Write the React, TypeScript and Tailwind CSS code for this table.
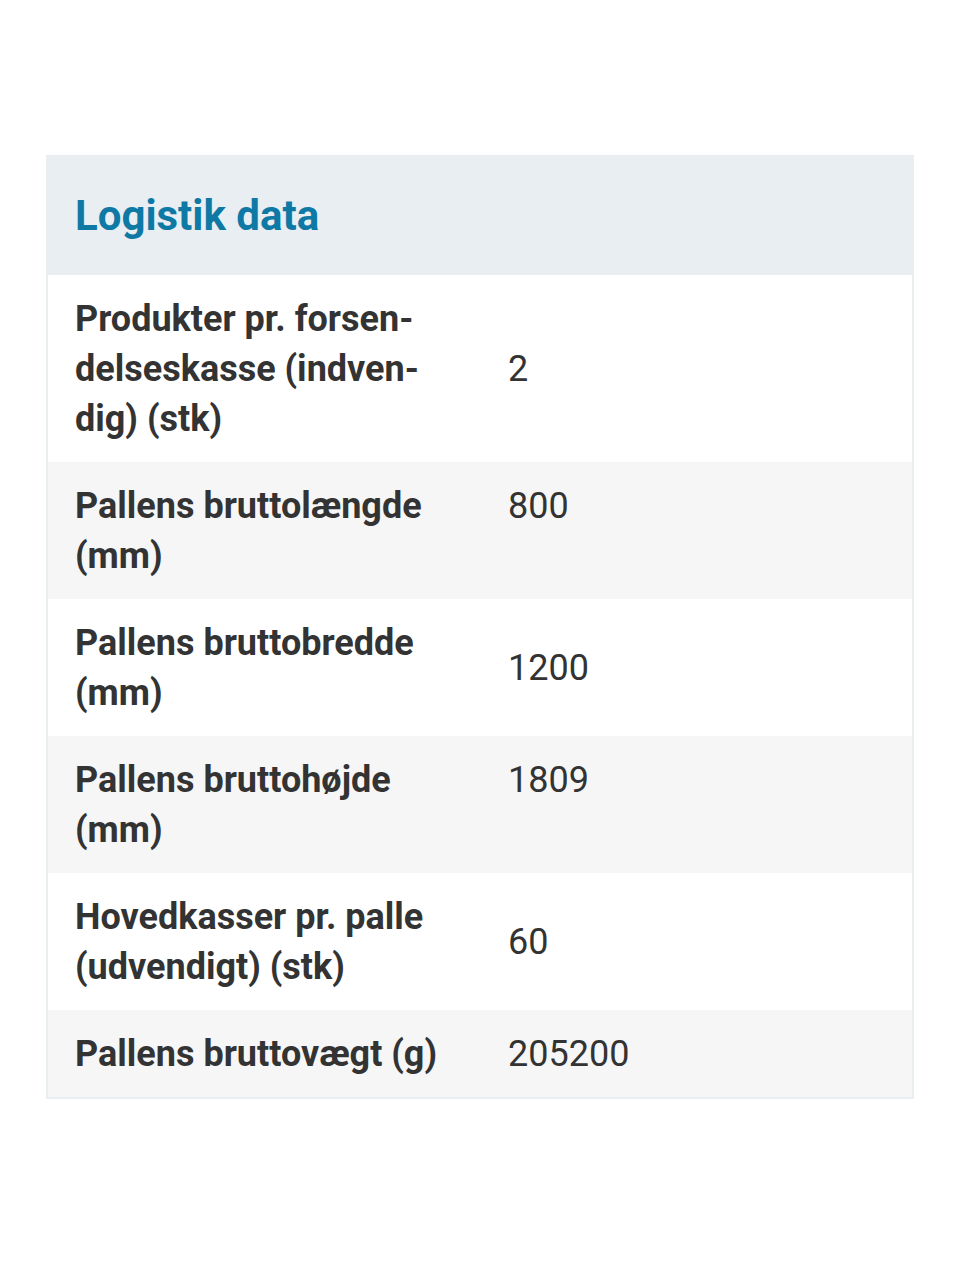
import React from 'react';

type Row = {
  lines: string[];
  value: string;
  align: 'center' | 'top';
};

const rows: Row[] = [
  { lines: ['Produkter pr. forsen-', 'delseskasse (indven-', 'dig) (stk)'], value: '2', align: 'center' },
  { lines: ['Pallens bruttolængde', '(mm)'], value: '800', align: 'top' },
  { lines: ['Pallens bruttobredde', '(mm)'], value: '1200', align: 'center' },
  { lines: ['Pallens bruttohøjde', '(mm)'], value: '1809', align: 'top' },
  { lines: ['Hovedkasser pr. palle', '(udvendigt) (stk)'], value: '60', align: 'center' },
  { lines: ['Pallens bruttovægt (g)'], value: '205200', align: 'top' },
];

const App: React.FC = () => {
  return (
    <div
      className="min-h-[1280px] bg-white pt-[155px] px-[46px]"
      style={{ fontFamily: 'Roboto, "Liberation Sans", sans-serif' }}
    >
      <div className="border-2 border-[#e9eef0]">
        <div className="h-[118px] bg-[#e9eef2] flex items-center pl-[27px]">
          <h2 className="text-[42px] font-bold text-[#0f79a6] leading-none">Logistik data</h2>
        </div>
        {rows.map((row, i) => (
          <div
            key={i}
            className={`flex py-[18.5px] pl-[27px] text-[36px] leading-[50px] text-[#333333] ${
              i % 2 === 1 ? 'bg-[#f6f6f6]' : 'bg-white'
            } ${row.align === 'center' ? 'items-center' : 'items-start'}`}
          >
            <div className="w-[433px] shrink-0 font-bold whitespace-nowrap">
              {row.lines.map((l, j) => (
                <div key={j}>{l}</div>
              ))}
            </div>
            <div className="font-normal">{row.value}</div>
          </div>
        ))}
      </div>
    </div>
  );
};

export default App;
